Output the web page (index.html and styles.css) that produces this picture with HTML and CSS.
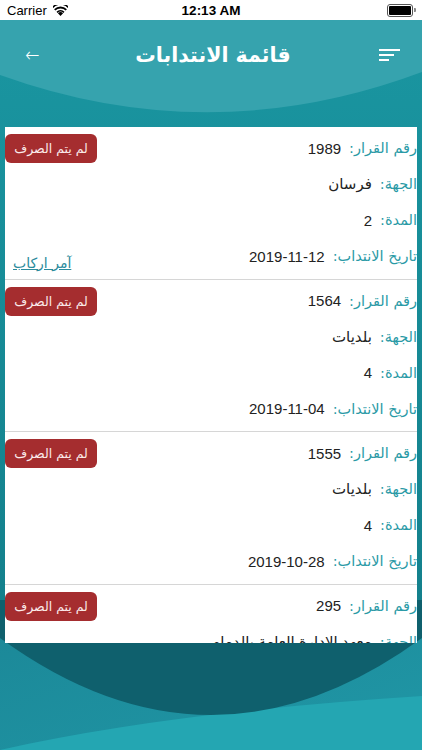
FILE: index.html
```html
<!DOCTYPE html>
<html lang="ar">
<head>
    <meta charset="UTF-8">
    <meta name="viewport" content="width=device-width, initial-scale=1.0">
    <title>قائمة الانتدابات</title>
    <link rel="stylesheet" href="styles.css">
</head>
<body>
<div class="screen">
    <!-- decorative waves behind everything -->
    <svg class="backdrop" width="422" height="750" viewBox="0 0 422 750">
        <defs>
            <linearGradient id="mid" x1="0" y1="0" x2="0" y2="1">
                <stop offset="0" stop-color="#1a96a1"/>
                <stop offset="1" stop-color="#137f8b"/>
            </linearGradient>
            <linearGradient id="low" x1="0" y1="0" x2="1" y2="1">
                <stop offset="0" stop-color="#1b8797"/>
                <stop offset="1" stop-color="#2097a6"/>
            </linearGradient>
        </defs>
        <rect x="0" y="20" width="422" height="620" fill="url(#mid)"/>
        <path d="M0 20 H422 V72 Q211 151 0 75 Z" fill="#36a3ae"/>
        <rect x="0" y="600" width="422" height="150" fill="url(#low)"/>
        <path d="M0 750 Q170 712 422 696 V750 Z" fill="#24a6b2"/>
        <path d="M0 600 H422 V638 Q211 792 0 638 Z" fill="#0f606d"/>
    </svg>

    <div class="status-bar">
        <div class="carrier">
            Carrier
            <svg class="wifi" width="15" height="11" viewBox="0 0 15 11">
                <path d="M7.5 11 L4.9 8.2 A3.8 3.8 0 0 1 10.1 8.2 Z" fill="#000"/>
                <path d="M3.5 6.7 A5.8 5.8 0 0 1 11.5 6.7 L10.4 7.9 A4.2 4.2 0 0 0 4.6 7.9 Z" fill="#000"/>
                <path d="M1.1 4.2 A9.2 9.2 0 0 1 13.9 4.2 L12.7 5.5 A7.5 7.5 0 0 0 2.3 5.5 Z" fill="#000"/>
                <path d="M-1 1.7 A12 12 0 0 1 16 1.7 L15 2.9 A10.5 10.5 0 0 0 0 2.9 Z" fill="#000" transform="translate(0.2 0) scale(0.98 1)"/>
            </svg>
        </div>
        <div class="clock">12:13 AM</div>
        <div class="battery"><span class="battery-level"></span></div>
    </div>

    <header class="app-header">
        <span class="back">&#8592;</span>
        <h1>قائمة الانتدابات</h1>
        <svg class="menu" width="22" height="14" viewBox="0 0 22 14">
            <rect x="0" y="1" width="21" height="2" fill="#fff"/>
            <rect x="0" y="6" width="15" height="2" fill="#fff"/>
            <rect x="0" y="11" width="10" height="2" fill="#fff"/>
        </svg>
    </header>

    <div class="card">
        <div class="item">
            <div class="details">
                <div class="row"><span class="label">رقم القرار:</span><span class="value">1989</span></div>
                <div class="row"><span class="label">الجهة:</span><span class="value">فرسان</span></div>
                <div class="row"><span class="label">المدة:</span><span class="value">2</span></div>
                <div class="row"><span class="label">تاريخ الانتداب:</span><span class="value">2019-11-12</span></div>
            </div>
            <div class="side">
                <span class="badge">لم يتم الصرف</span>
                <a class="order-link" href="#">آمر اركاب</a>
            </div>
        </div>

        <div class="item">
            <div class="details">
                <div class="row"><span class="label">رقم القرار:</span><span class="value">1564</span></div>
                <div class="row"><span class="label">الجهة:</span><span class="value">بلديات</span></div>
                <div class="row"><span class="label">المدة:</span><span class="value">4</span></div>
                <div class="row"><span class="label">تاريخ الانتداب:</span><span class="value">2019-11-04</span></div>
            </div>
            <div class="side">
                <span class="badge">لم يتم الصرف</span>
            </div>
        </div>

        <div class="item">
            <div class="details">
                <div class="row"><span class="label">رقم القرار:</span><span class="value">1555</span></div>
                <div class="row"><span class="label">الجهة:</span><span class="value">بلديات</span></div>
                <div class="row"><span class="label">المدة:</span><span class="value">4</span></div>
                <div class="row"><span class="label">تاريخ الانتداب:</span><span class="value">2019-10-28</span></div>
            </div>
            <div class="side">
                <span class="badge">لم يتم الصرف</span>
            </div>
        </div>

        <div class="item">
            <div class="details">
                <div class="row"><span class="label">رقم القرار:</span><span class="value">295</span></div>
                <div class="row"><span class="label">الجهة:</span><span class="value">معهد الإدارة العامة بالدمام</span></div>
            </div>
            <div class="side">
                <span class="badge">لم يتم الصرف</span>
            </div>
        </div>
    </div>
</div>
</body>
</html>
```

FILE: styles.css
```css
/* Page */
body {
    margin: 0;
    background: #178f9b;
    font-family: "Liberation Sans", "DejaVu Sans", sans-serif;
}

.screen {
    position: relative;
    width: 422px;
    height: 750px;
    overflow: hidden;
}

.backdrop {
    position: absolute;
    top: 0;
    left: 0;
    z-index: 0;
}

.status-bar,
.app-header,
.card {
    position: relative;
    z-index: 1;
}

/* Status bar */
.status-bar {
    height: 20px;
    background: #fff;
    display: grid;
    grid-template-columns: 1fr auto 1fr;
    align-items: center;
    padding: 0 7px;
    font-size: 13px;
    color: #000;
}

.carrier {
    display: flex;
    align-items: center;
    gap: 6px;
}

.clock {
    font-weight: bold;
    font-size: 13.5px;
}

.battery {
    justify-self: end;
    width: 22px;
    height: 9px;
    border: 1px solid #555;
    border-radius: 3px;
    padding: 1px;
    margin-right: 2px;
    position: relative;
}

.battery::after {
    content: "";
    position: absolute;
    right: -4px;
    top: 3px;
    width: 2px;
    height: 4px;
    background: #888;
    border-radius: 0 1px 1px 0;
}

.battery-level {
    display: block;
    height: 100%;
    background: #000;
    border-radius: 1px;
}

/* Header */
.app-header {
    height: 70px;
    display: flex;
    align-items: center;
    justify-content: space-between;
    padding: 0 21px 0 24px;
    color: #fff;
}

.back {
    font-size: 20px;
    line-height: 1;
    font-family: "DejaVu Sans", sans-serif;
    font-weight: 300;
    transform: scaleX(0.85);
}

.app-header h1 {
    margin: 0;
    font-family: "DejaVu Sans", sans-serif;
    font-size: 20.5px;
    font-weight: bold;
    padding-left: 6px;
}

/* List card */
.card {
    margin: 37px 5px 0;
    height: 516px;
    background: #fff;
    overflow: hidden;
}

.item {
    direction: rtl;
    display: flex;
    justify-content: space-between;
    height: 152.6px;
    padding: 3px 0 6px;
    box-sizing: border-box;
    border-bottom: 1px solid #d6d6d6;
}

.row {
    height: 36px;
    display: flex;
    align-items: center;
    gap: 8px;
    white-space: nowrap;
}

.label {
    color: #2a9aa6;
    font-family: "DejaVu Sans", sans-serif;
    font-size: 14.5px;
}

.value {
    color: #222;
    font-size: 15px;
}

.side {
    display: flex;
    flex-direction: column;
    justify-content: space-between;
    align-items: flex-end;
    padding-top: 4px;
}

.badge {
    background: #a52d2f;
    color: #fbeaea;
    font-family: "DejaVu Sans", sans-serif;
    font-size: 12.5px;
    width: 92px;
    height: 29px;
    line-height: 29px;
    text-align: center;
    border-radius: 6px;
}

.order-link {
    color: #2b8b9c;
    font-family: "DejaVu Sans", sans-serif;
    font-size: 14px;
    margin-left: 8px;
    margin-bottom: 2px;
}
```
